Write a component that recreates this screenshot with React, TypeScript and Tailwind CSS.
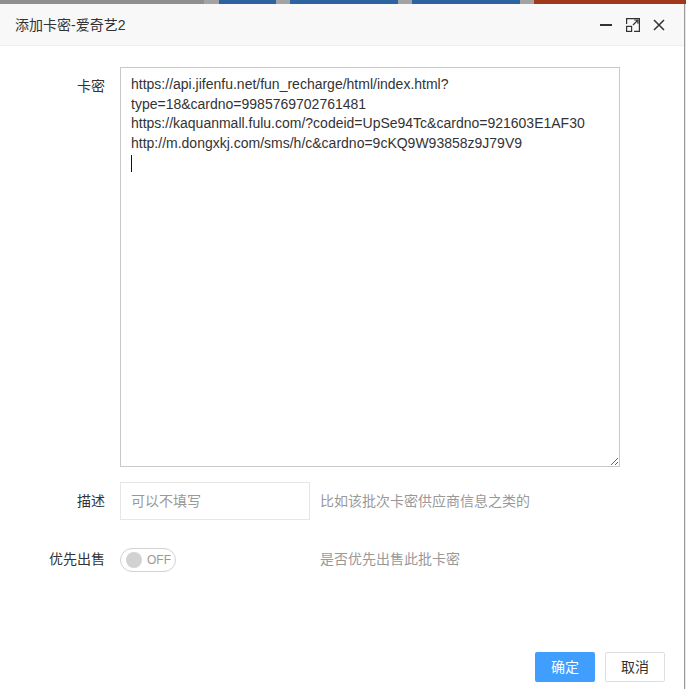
import { useState } from "react";

const FONT = "font-['Liberation_Sans','Noto_Sans_CJK_SC',sans-serif]";

const CARDS = [
  "https://api.jifenfu.net/fun_recharge/html/index.html?",
  "type=18&cardno=9985769702761481",
  "https://kaquanmall.fulu.com/?codeid=UpSe94Tc&cardno=921603E1AF30",
  "http://m.dongxkj.com/sms/h/c&cardno=9cKQ9W93858z9J79V9",
  "",
].join("\n");

function MaxIcon() {
  return (
    <svg width="14" height="14" viewBox="0 0 14 14" fill="none" stroke="#333" strokeWidth="1.2">
      <path d="M0.6 6 V0.6 H13.4 V13.4 H8" />
      <rect x="0.6" y="8.4" width="5" height="5" />
      <path d="M7 7 L12 2 M8.2 2 H12 V5.8" />
    </svg>
  );
}

export default function App() {
  const [cards, setCards] = useState(CARDS);
  const [desc, setDesc] = useState("");
  const [priority, setPriority] = useState(false);

  return (
    <div className={`flex h-[689px] w-[686px] flex-col overflow-hidden bg-white ${FONT}`}>
      {/* page behind the layer */}
      <div className="flex h-[4px] shrink-0">
        <div className="w-[204px] bg-[#8f8f8f]" />
        <div className="w-[15px] bg-[#a3a3a3]" />
        <div className="w-[57px] bg-[#2b64a0]" />
        <div className="w-[14px] bg-[#a3a3a3]" />
        <div className="w-[108px] bg-[#2b64a0]" />
        <div className="w-[14px] bg-[#a3a3a3]" />
        <div className="w-[108px] bg-[#2b64a0]" />
        <div className="w-[14px] bg-[#a3a3a3]" />
        <div className="flex-1 bg-[#a0381a]" />
      </div>

      <div className="flex min-h-0 flex-1">
        <div className="flex w-[684px] flex-col bg-white">
          {/* title bar */}
          <div className="flex h-[42px] shrink-0 items-center border-b border-[#eeeeee] bg-[#f8f8f8] pl-[15px] pr-[19px]">
            <span className="flex-1 text-[14px] leading-[20px] text-[#333]">添加卡密-爱奇艺2</span>
            <div className="flex items-center">
              <span className="mr-[14px] block h-[2px] w-[12px] bg-[#333]" />
              <span className="mr-[13px]">
                <MaxIcon />
              </span>
              <svg width="12" height="12" viewBox="0 0 12 12" stroke="#333" strokeWidth="1.5">
                <path d="M1 1 L11 11 M11 1 L1 11" />
              </svg>
            </div>
          </div>

          {/* form */}
          <div className="flex-1 pt-[21px]">
            <div className="flex">
              <label className="w-[120px] shrink-0 pr-[15px] pt-[9px] text-right text-[14px] leading-[20px] text-[#333]">
                卡密
              </label>
              <div className="relative">
                <textarea
                  value={cards}
                  onChange={(e) => setCards(e.target.value)}
                  className={`block h-[400px] w-[500px] resize border border-[#c9c9c9] px-[10px] py-[7px] text-[14px] leading-[19.5px] text-[#333] outline-none ${FONT}`}
                />
                {/* caret */}
                <span className="pointer-events-none absolute left-[11px] top-[88px] h-[17px] w-px bg-[#111]" />
              </div>
            </div>

            <div className="mt-[15px] flex items-center">
              <label className="w-[120px] shrink-0 pr-[15px] text-right text-[14px] leading-[20px] text-[#333]">
                描述
              </label>
              <input
                value={desc}
                onChange={(e) => setDesc(e.target.value)}
                placeholder="可以不填写"
                className={`h-[38px] w-[190px] border border-[#e6e6e6] px-[10px] text-[14px] text-[#333] outline-none placeholder:text-[#999] ${FONT}`}
              />
              <span className="ml-[10px] text-[14px] leading-[20px] text-[#999]">比如该批次卡密供应商信息之类的</span>
            </div>

            <div className="mt-[20px] flex h-[38px] items-center">
              <label className="w-[120px] shrink-0 pr-[15px] text-right text-[14px] leading-[20px] text-[#333]">
                优先出售
              </label>
              <div className="w-[200px]">
                <button
                  onClick={() => setPriority(!priority)}
                  className="relative mt-[2px] flex h-[24px] w-[56px] items-center rounded-full border border-[#d2d2d2] bg-white"
                >
                  <span className="absolute left-[5px] top-[3px] h-[16px] w-[16px] rounded-full bg-[#d2d2d2]" />
                  <span className="ml-[26px] text-[12px] leading-[16px] text-[#999]">OFF</span>
                </button>
              </div>
              <span className="text-[14px] leading-[20px] text-[#999]">是否优先出售此批卡密</span>
            </div>
          </div>

          {/* buttons */}
          <div className="flex shrink-0 justify-end gap-[10px] pb-[7px] pr-[19px]">
            <button className="h-[30px] w-[60px] rounded-[2px] bg-[#409eff] text-[14px] text-white">确定</button>
            <button className="h-[30px] w-[60px] rounded-[2px] border border-[#dedede] bg-white text-[14px] text-[#333]">
              取消
            </button>
          </div>
        </div>
        <div className="w-px bg-[#9a9a9a]" />
        <div className="w-px bg-[#e6e6e6]" />
      </div>
    </div>
  );
}
